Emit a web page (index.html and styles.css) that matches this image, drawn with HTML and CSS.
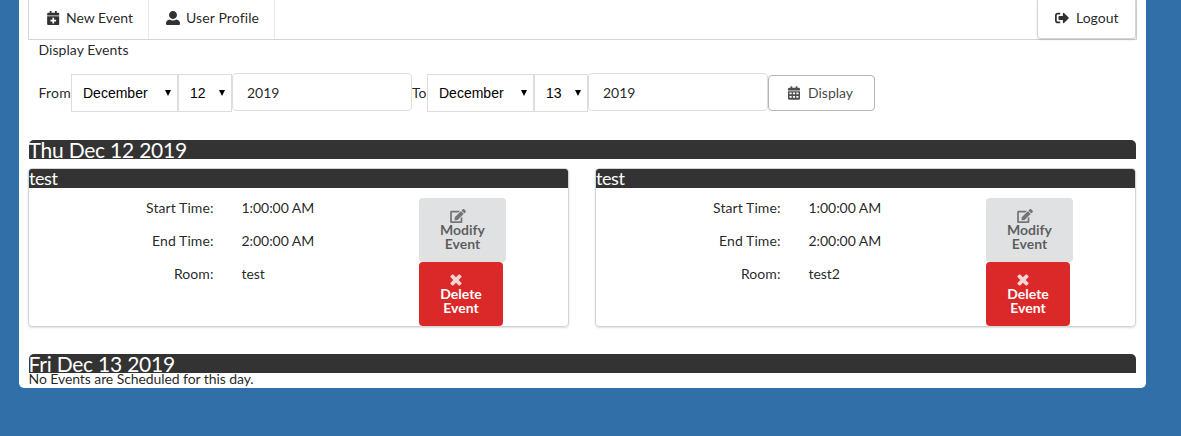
FILE: index.html
```
<!DOCTYPE html>
<html lang="en">
<head>
<meta charset="utf-8">
<title>Events</title>
<link rel="stylesheet" href="styles.css">
</head>
<body>
<svg class="defs" aria-hidden="true">
  <symbol id="calendar-plus" viewBox="0 0 448 512"><path d="M436 160H12c-6.600 0-12-5.400-12-12v-36c0-26.500 21.500-48 48-48h48V12c0-6.600 5.400-12 12-12h40c6.600 0 12 5.400 12 12v52h128V12c0-6.600 5.400-12 12-12h40c6.600 0 12 5.400 12 12v52h48c26.500 0 48 21.500 48 48v36c0 6.600-5.400 12-12 12zM12 192h424c6.600 0 12 5.400 12 12v260c0 26.500-21.500 48-48 48H48c-26.500 0-48-21.500-48-48V204c0-6.600 5.400-12 12-12zm316 140c0-6.600-5.400-12-12-12h-60v-60c0-6.600-5.400-12-12-12h-40c-6.600 0-12 5.400-12 12v60h-60c-6.600 0-12 5.400-12 12v40c0 6.600 5.400 12 12 12h60v60c0 6.600 5.400 12 12 12h40c6.600 0 12-5.400 12-12v-60h60c6.600 0 12-5.400 12-12v-40z"/></symbol>
  <symbol id="user" viewBox="0 0 512 512"><path d="M256 0c88.400 0 144 66 144 144s-55.600 144-144 144-144-66-144-144S167.600 0 256 0zm128 308c70 10 128 60 128 132v24c0 26.500-21.500 48-48 48H48c-26.500 0-48-21.500-48-48v-24c0-72 58-122 128-132 38 26 80 36 128 36s90-10 128-36z"/></symbol>
  <symbol id="sign-out" viewBox="0 0 512 512"><path d="M497 273L329 441c-15 15-41 4.500-41-17v-96H152c-13.300 0-24-10.700-24-24v-96c0-13.300 10.700-24 24-24h136V88c0-21.400 25.900-32 41-17l168 168c9.300 9.400 9.300 24.600 0 34zM192 436v-40c0-6.600-5.400-12-12-12H96c-17.700 0-32-14.300-32-32V160c0-17.700 14.300-32 32-32h84c6.600 0 12-5.400 12-12V76c0-6.600-5.400-12-12-12H96c-53 0-96 43-96 96v192c0 53 43 96 96 96h84c6.600 0 12-5.400 12-12z"/></symbol>
  <symbol id="calendar" viewBox="0 0 448 512"><path fill-rule="evenodd" d="M48 64h48V12q0-12 12-12h40q12 0 12 12v52h128V12q0-12 12-12h40q12 0 12 12v52h48q48 0 48 48v48H0v-48q0-48 48-48zM0 192h448v272q0 48-48 48H48q-48 0-48-48zM56 240v64h80v-64zm128 0v64h80v-64zm128 0v64h80v-64zM56 368v64h80v-64zm128 0v64h80v-64zm128 0v64h80v-64z"/></symbol>
  <symbol id="edit" viewBox="0 0 576 512"><path d="M402.600 83.200l90.200 90.200c3.800 3.800 3.800 10 0 13.800L274.400 405.600l-92.800 10.300c-12.400 1.400-22.900-9.100-21.500-21.500l10.300-92.800L388.800 83.200c3.800-3.800 10-3.800 13.800 0zm162-22.900l-48.800-48.800c-15.200-15.200-39.900-15.200-55.200 0l-35.400 35.400c-3.800 3.800-3.800 10 0 13.800l90.200 90.200c3.800 3.800 10 3.800 13.800 0l35.400-35.400c15.200-15.300 15.200-40 0-55.200zM384 346.200V448H64V128h229.800c3.200 0 6.200-1.300 8.500-3.500l40-40c7.600-7.600 2.200-20.500-8.500-20.500H48C21.500 64 0 85.500 0 112v352c0 26.500 21.500 48 48 48h352c26.500 0 48-21.500 48-48V306.200c0-10.700-12.900-16-20.500-8.500l-40 40c-2.200 2.300-3.500 5.300-3.500 8.500z"/></symbol>
  <symbol id="delete" viewBox="0 0 14 14"><path d="M3.800.7 7 3.900 10.200.7q.7-.5 1.400 0l1.700 1.700q.5.700 0 1.400L10.100 7l3.200 3.200q.5.700 0 1.400l-1.700 1.700q-.7.500-1.400 0L7 10.100l-3.200 3.200q-.7.500-1.400 0L.7 11.600q-.5-.7 0-1.400L3.900 7 .7 3.800q-.5-.7 0-1.400L2.400.7q.7-.5 1.400 0z"/></symbol>
</svg>
<main class="page">
  <nav class="menu">
    <a class="item new"><svg class="icon cal"><use href="#calendar-plus"/></svg>New Event</a>
    <a class="item profile"><svg class="icon usr"><use href="#user"/></svg>User Profile</a>
    <a class="logout"><svg class="icon out"><use href="#sign-out"/></svg>Logout</a>
  </nav>
  <p class="caption">Display Events</p>
  <form class="filters">
    <span class="word from">From</span>
    <span class="select month"><select><option>December</option></select></span>
    <span class="select day"><select><option>12</option></select></span>
    <input class="year" value="2019">
    <span class="word to">To</span>
    <span class="select month"><select><option>December</option></select></span>
    <span class="select day"><select><option>13</option></select></span>
    <input class="year" value="2019">
    <button class="display" type="button"><svg class="icon grid"><use href="#calendar"/></svg>Display</button>
  </form>
  <h2 class="date">Thu Dec 12 2019</h2>
  <div class="cards">
    <section class="card">
      <h3 class="title">test</h3>
      <div class="body">
        <dl class="facts"><dt>Start Time:</dt><dd>1:00:00 AM</dd><dt>End Time:</dt><dd>2:00:00 AM</dd><dt>Room:</dt><dd>test</dd></dl>
        <div class="actions">
          <button class="action modify"><svg class="pen"><use href="#edit"/></svg><span>Modify<br>Event</span></button>
          <button class="action delete"><svg class="cross"><use href="#delete"/></svg><span>Delete<br>Event</span></button>
        </div>
      </div>
    </section>
    <section class="card">
      <h3 class="title">test</h3>
      <div class="body">
        <dl class="facts"><dt>Start Time:</dt><dd>1:00:00 AM</dd><dt>End Time:</dt><dd>2:00:00 AM</dd><dt>Room:</dt><dd>test2</dd></dl>
        <div class="actions">
          <button class="action modify"><svg class="pen"><use href="#edit"/></svg><span>Modify<br>Event</span></button>
          <button class="action delete"><svg class="cross"><use href="#delete"/></svg><span>Delete<br>Event</span></button>
        </div>
      </div>
    </section>
  </div>
  <h2 class="date second">Fri Dec 13 2019</h2>
  <p class="empty">No Events are Scheduled for this day.</p>
</main>
</body>
</html>
```

FILE: styles.css
```
* { box-sizing: border-box; }
body { margin: 0; background: #316fa9; font: 14px/20px Lato, "Liberation Sans", sans-serif; color: rgba(0,0,0,.87); overflow: hidden; }
.defs { display: none; }
p, h2, h3, dl, dd { margin: 0; }
button, input { font: inherit; margin: 0; }
.icon { fill: currentColor; flex: none; opacity: .92; }
.page { width: 1127px; height: 388px; margin-left: 19px; padding: 0 9px; background: #fff; border-radius: 0 0 5px 5px; }
.menu { display: flex; height: 40px; width: 1109px; border: 1px solid #d4d4d5; border-top: 0; }
.item { display: flex; align-items: center; padding-bottom: 3px; border-right: 1px solid #e8e8e9; }
.new { width: 120px; padding-left: 18px; }
.profile { width: 126px; padding-left: 17px; letter-spacing: .12px; }
.cal { width: 12.500px; height: 14px; margin-right: 6.500px; }
.usr { width: 14px; height: 14px; margin-right: 6px; }
.logout { display: flex; align-items: center; width: 99px; height: 39px; margin-left: auto; padding: 0 0 2px 17px; border: 1px solid #d4d4d5; border-top: 0; border-radius: 0 0 4px 4px; box-shadow: 0 1px 2px rgba(34,36,38,.15); }
.out { width: 14px; height: 14px; margin-right: 7px; }
.caption { padding-left: 10.500px; letter-spacing: .05px; }
.filters { display: flex; height: 40px; margin-top: 13px; padding-left: 10.500px; }
.word { line-height: 20px; padding-top: 10px; }
.from { width: 32.500px; letter-spacing: .2px; }
.to { width: 15px; }
.select { position: relative; flex: none; height: 38px; margin-top: 1px; }
.select select { appearance: none; display: block; width: 100%; height: 38px; margin: 0; padding: 0 0 0 11px; border: 1px solid #ddd; border-radius: 0; background: #fff; color: #000; font: 14px "Liberation Sans", Arial, sans-serif; }
.select::after { content: ""; position: absolute; right: 7px; top: 16px; border: 3.500px solid transparent; border-top: 6px solid #000; border-bottom: 0; }
.month { width: 107px; }
.day { width: 54px; }
.year { width: 180px; height: 38px; padding: 1px 14px 0; border: 1px solid #dededf; border-radius: 4px; color: rgba(0,0,0,.87); line-height: 17px; }
.display { display: flex; align-items: center; width: 107px; height: 36px; margin-top: 2px; padding: 0 0 0 19px; border: 1px solid #b5b5b6; border-radius: 4px; background: #fff; color: rgba(0,0,0,.75); }
.grid { width: 12px; height: 14px; margin-right: 8px; }
.date { height: 19px; width: 1107.500px; margin: 27px 0 0 .5px; background: #333; border-radius: 5px 5px 0 0; color: #fff; font-size: 21px; line-height: 19px; letter-spacing: -.22px; font-weight: 400; white-space: nowrap; }
.cards { display: flex; gap: 26px; width: 1109px; margin-top: 9px; }
.card { flex: none; width: 541px; height: 159px; border: 1px solid #d4d4d5; border-radius: 4px; box-shadow: 0 1px 2px rgba(34,36,38,.15); }
.title { height: 19px; background: #333; border-radius: 3px 3px 0 0; color: #fff; font-size: 18px; line-height: 18px; letter-spacing: -.4px; font-weight: 400; }
.body { display: grid; grid-template-columns: 390px 1fr; padding-top: 10px; }
.facts { display: grid; grid-template-columns: 184.500px 1fr; column-gap: 28px; grid-auto-rows: 33px; align-content: start; }
.facts dt { text-align: right; letter-spacing: .08px; }
.facts dd { letter-spacing: -.05px; }
.actions { display: flex; flex-direction: column; align-items: flex-start; }
.action { display: flex; flex-direction: column; align-items: center; height: 64px; padding: 11px 0 0; border: 0; border-radius: 4px; line-height: 14px; text-align: center; }
.modify { width: 87px; background: #e0e1e2; color: rgba(0,0,0,.6); font-weight: 700; }
.delete { width: 84px; background: #db2828; color: #fff; font-weight: 700; }
.pen { width: 16px; height: 14px; margin-right: 10px; fill: currentColor; opacity: .8; }
.cross { width: 12px; height: 12px; margin: 1px 10px 1px 0; fill: currentColor; opacity: .8; }
.empty { margin-top: -4px; padding-left: .5px; letter-spacing: -.08px; }
```
